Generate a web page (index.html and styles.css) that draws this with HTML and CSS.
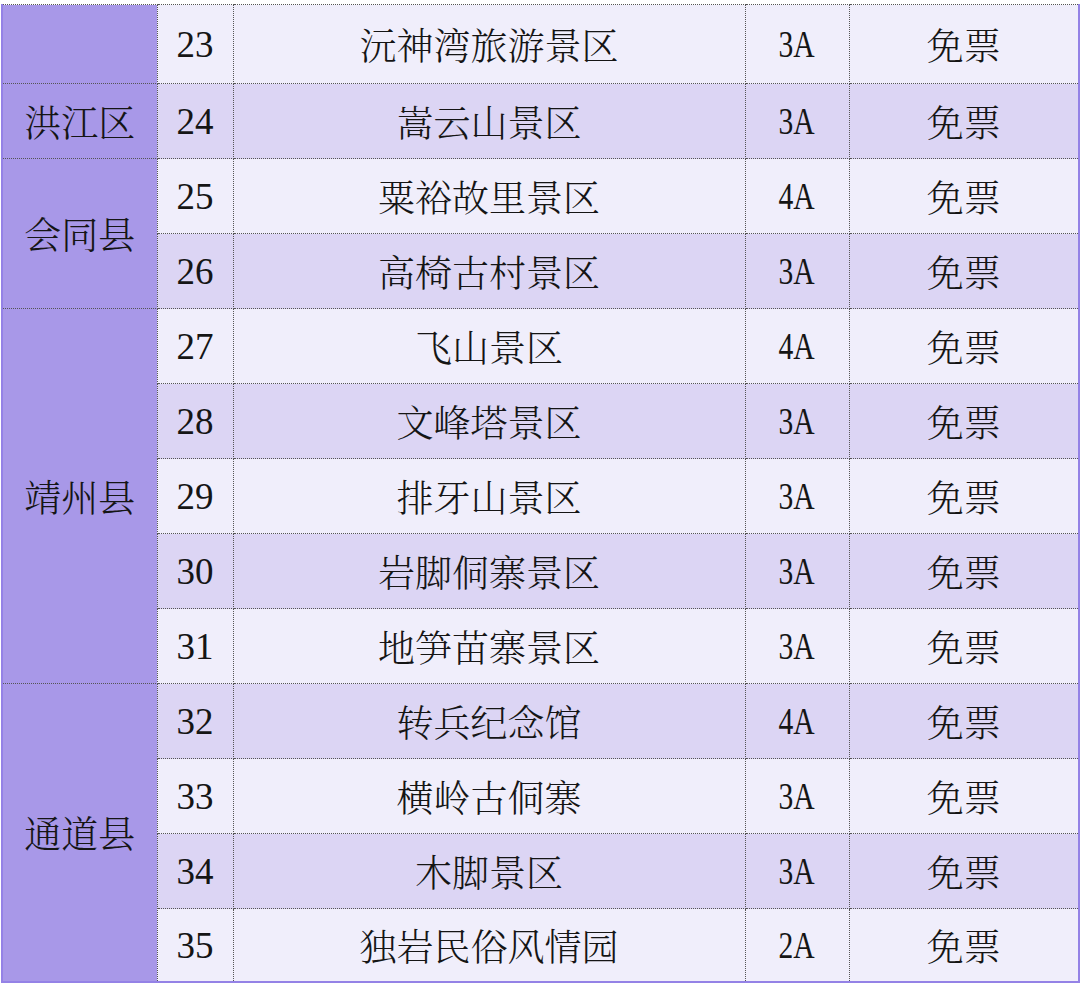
FILE: index.html
```html
<!DOCTYPE html>
<html lang="zh">
<head>
<meta charset="utf-8">
<link rel="stylesheet" href="styles.css">
</head>
<body>
<table class="sheet">
  <colgroup>
    <col class="c-county">
    <col class="c-no">
    <col class="c-name">
    <col class="c-level">
    <col class="c-fee">
  </colgroup>
  <tbody>
    <tr class="light first"><td class="county"></td><td class="num">23</td><td class="cn">沅神湾旅游景区</td><td class="lvl"><span class="lvl-text">3A</span></td><td class="cn">免票</td></tr>
    <tr class="dark"><td class="county cn">洪江区</td><td class="num">24</td><td class="cn">嵩云山景区</td><td class="lvl"><span class="lvl-text">3A</span></td><td class="cn">免票</td></tr>
    <tr class="light"><td class="county cn" rowspan="2">会同县</td><td class="num">25</td><td class="cn">粟裕故里景区</td><td class="lvl"><span class="lvl-text">4A</span></td><td class="cn">免票</td></tr>
    <tr class="dark"><td class="num">26</td><td class="cn">高椅古村景区</td><td class="lvl"><span class="lvl-text">3A</span></td><td class="cn">免票</td></tr>
    <tr class="light"><td class="county cn" rowspan="5">靖州县</td><td class="num">27</td><td class="cn">飞山景区</td><td class="lvl"><span class="lvl-text">4A</span></td><td class="cn">免票</td></tr>
    <tr class="dark"><td class="num">28</td><td class="cn">文峰塔景区</td><td class="lvl"><span class="lvl-text">3A</span></td><td class="cn">免票</td></tr>
    <tr class="light"><td class="num">29</td><td class="cn">排牙山景区</td><td class="lvl"><span class="lvl-text">3A</span></td><td class="cn">免票</td></tr>
    <tr class="dark"><td class="num">30</td><td class="cn">岩脚侗寨景区</td><td class="lvl"><span class="lvl-text">3A</span></td><td class="cn">免票</td></tr>
    <tr class="light"><td class="num">31</td><td class="cn">地笋苗寨景区</td><td class="lvl"><span class="lvl-text">3A</span></td><td class="cn">免票</td></tr>
    <tr class="dark"><td class="county cn" rowspan="4">通道县</td><td class="num">32</td><td class="cn">转兵纪念馆</td><td class="lvl"><span class="lvl-text">4A</span></td><td class="cn">免票</td></tr>
    <tr class="light"><td class="num">33</td><td class="cn">横岭古侗寨</td><td class="lvl"><span class="lvl-text">3A</span></td><td class="cn">免票</td></tr>
    <tr class="dark"><td class="num">34</td><td class="cn">木脚景区</td><td class="lvl"><span class="lvl-text">3A</span></td><td class="cn">免票</td></tr>
    <tr class="light last"><td class="num">35</td><td class="cn">独岩民俗风情园</td><td class="lvl"><span class="lvl-text">2A</span></td><td class="cn">免票</td></tr>
  </tbody>
</table>
</body>
</html>
```

FILE: styles.css
```css
html, body {
  margin: 0;
  padding: 0;
  background: #ffffff;
}

body {
  padding: 4px 0 0 1px;
}

.sheet {
  border-collapse: collapse;
  table-layout: fixed;
  width: 1077px;
  color: #151515;
  border-left: 2px solid #9482e6;
  border-right: 2px solid #9482e6;
  border-bottom: 2px solid #9482e6;
}

.c-county { width: 155px; }
.c-no { width: 76px; }
.c-name { width: 512px; }
.c-level { width: 104px; }
.c-fee { width: 230px; }

.sheet td {
  border: 1px dotted #555555;
  padding: 0;
  height: 74px;
  text-align: center;
  vertical-align: middle;
  font-size: 37px;
  line-height: 1;
}

.sheet tr.first td {
  height: 78px;
}

.sheet tr.last td {
  height: 72px;
}

.light td { background: #f0eefb; }
.dark td { background: #dcd5f4; }

.sheet td.county {
  background: #a898e8;
}

.cn {
  font-family: "Noto Serif CJK SC", "Noto Sans CJK SC", serif;
  font-weight: 300;
}

.num,
.lvl {
  font-family: "Liberation Serif", "Times New Roman", serif;
  font-weight: 400;
}

.lvl-text {
  display: inline-block;
  transform: scaleX(0.8);
}
```
